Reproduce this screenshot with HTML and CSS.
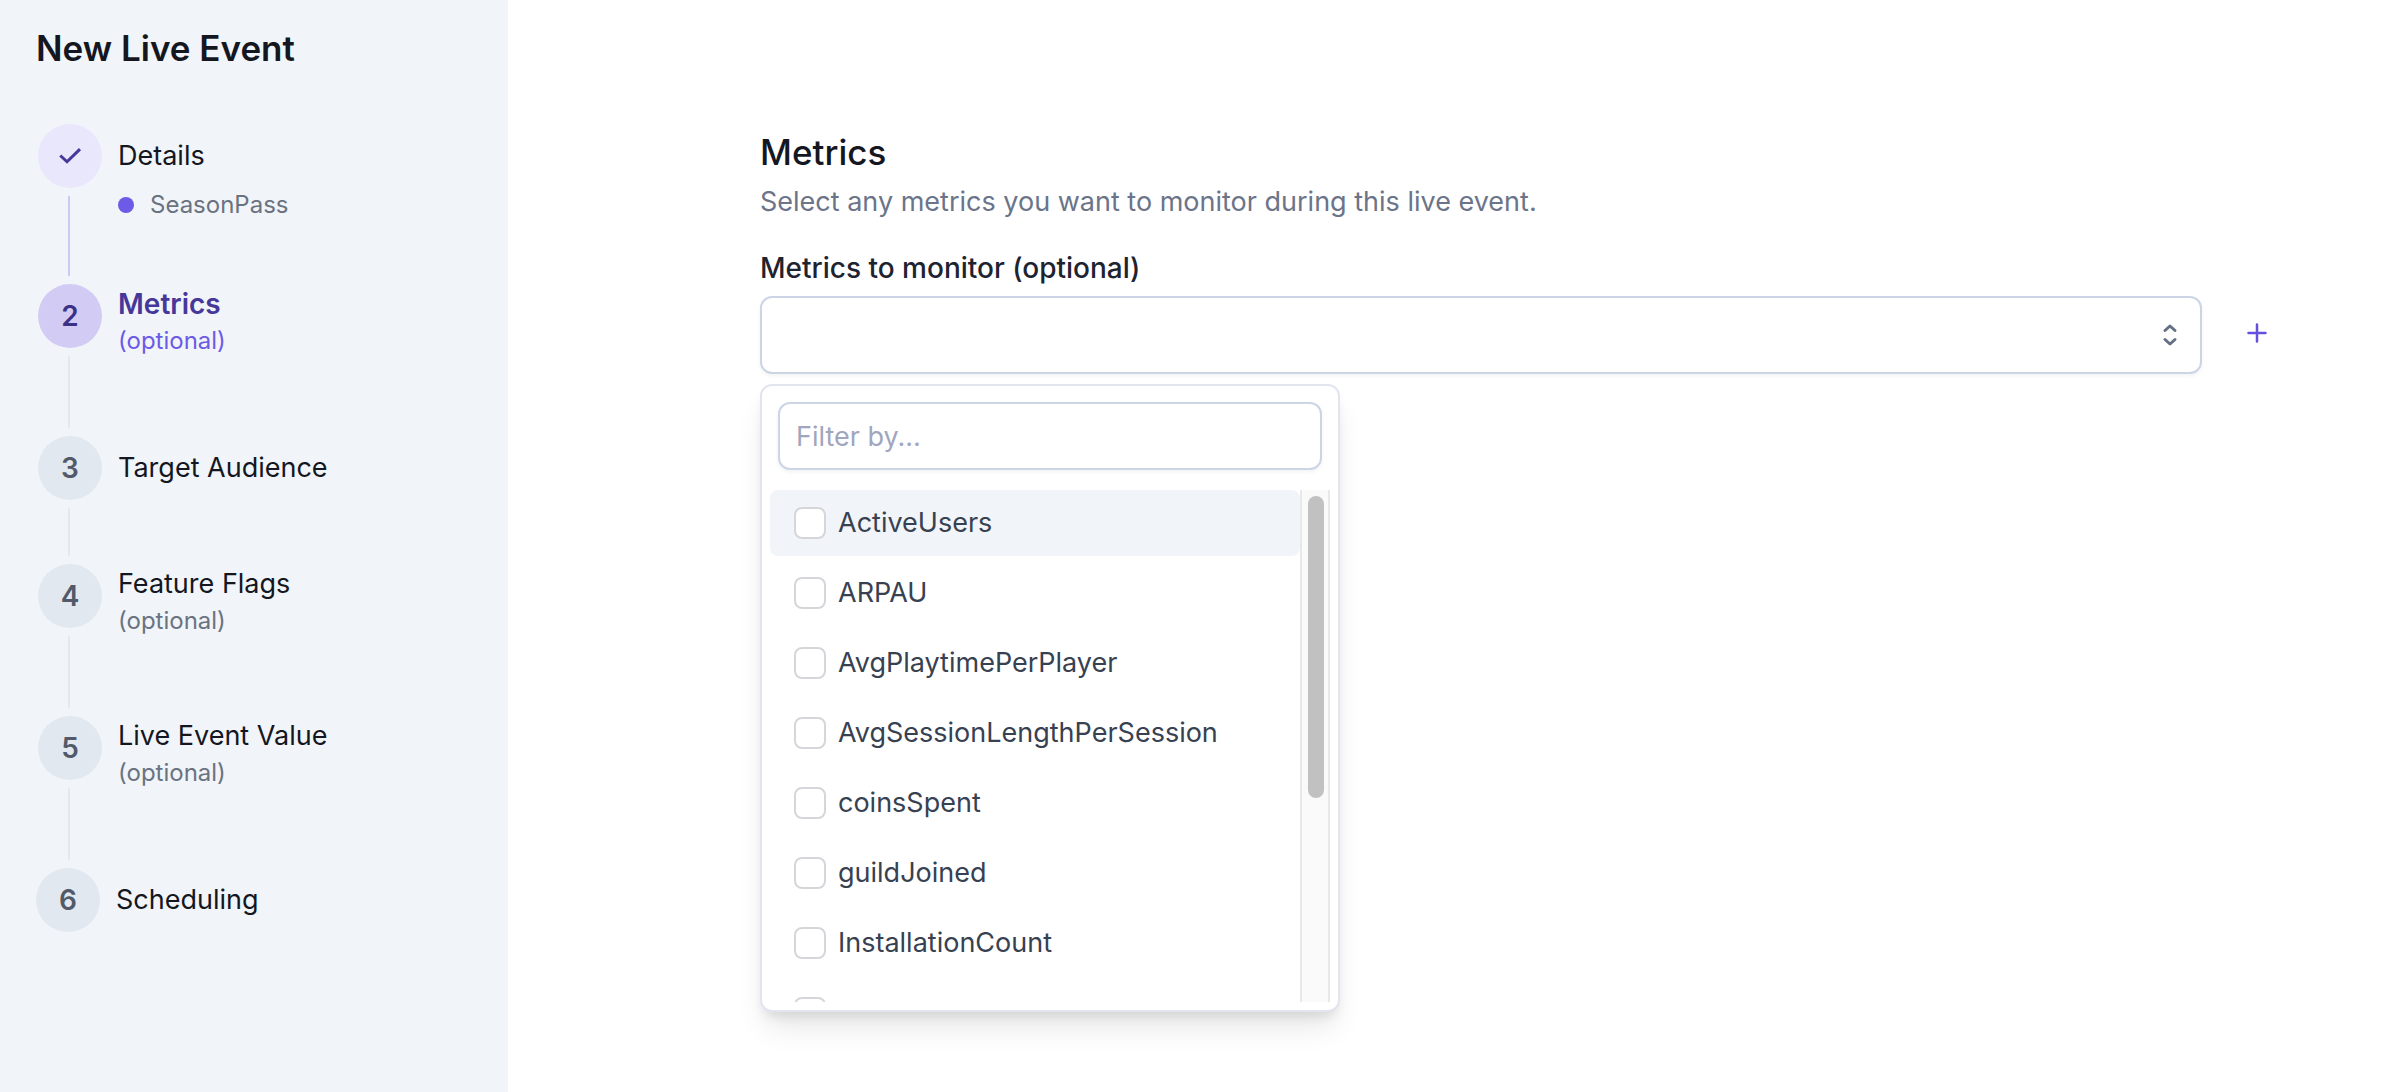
FILE: index.html
```html
<!DOCTYPE html>
<html lang="en">
<head>
<meta charset="utf-8">
<title>New Live Event</title>
<link rel="stylesheet" href="styles.css">
</head>
<body>
<div class="page">
    <aside class="sidebar">
        <h1>New Live Event</h1>
        <ol class="steps">
            <li class="step done">
                <div class="marker">
                    <span class="circle">
                        <svg width="24" height="20" viewBox="0 0 24 20" fill="none" stroke="currentColor" stroke-width="3"><path d="M2.3 9.5l6.7 6.3L22 3.2"/></svg>
                    </span>
                    <span class="line"></span>
                </div>
                <div class="content">
                    <div class="label">Details</div>
                    <div class="value"><span class="dot"></span>SeasonPass</div>
                </div>
            </li>
            <li class="step current">
                <div class="marker"><span class="circle">2</span><span class="line"></span></div>
                <div class="content optional">
                    <div class="label">Metrics</div>
                    <div class="note">(optional)</div>
                </div>
            </li>
            <li class="step">
                <div class="marker"><span class="circle">3</span><span class="line"></span></div>
                <div class="content">
                    <div class="label">Target Audience</div>
                </div>
            </li>
            <li class="step">
                <div class="marker"><span class="circle">4</span><span class="line"></span></div>
                <div class="content optional">
                    <div class="label">Feature Flags</div>
                    <div class="note">(optional)</div>
                </div>
            </li>
            <li class="step">
                <div class="marker"><span class="circle">5</span><span class="line"></span></div>
                <div class="content optional">
                    <div class="label">Live Event Value</div>
                    <div class="note">(optional)</div>
                </div>
            </li>
            <li class="step">
                <div class="marker"><span class="circle">6</span></div>
                <div class="content">
                    <div class="label">Scheduling</div>
                </div>
            </li>
        </ol>
    </aside>

    <main class="main">
        <h2>Metrics</h2>
        <p class="intro">Select any metrics you want to monitor during this live event.</p>
        <label class="field-label" for="metrics">Metrics to monitor (optional)</label>
        <div class="field-row">
            <div class="field">
                <select id="metrics"><option value=""></option></select>
                <svg class="chevrons" width="16" height="24" viewBox="0 0 16 24" fill="none" stroke="currentColor" stroke-width="3" stroke-linecap="round" stroke-linejoin="round"><path d="M3 7.5L8 3l5 4.5M3 16.5L8 21l5-4.5"/></svg>

                <div class="dropdown">
                    <input class="filter" type="text" placeholder="Filter by..." aria-label="Filter by">
                    <div class="options">
                        <div class="list">
                            <label class="option active"><input type="checkbox">ActiveUsers</label>
                            <label class="option"><input type="checkbox">ARPAU</label>
                            <label class="option"><input type="checkbox">AvgPlaytimePerPlayer</label>
                            <label class="option"><input type="checkbox">AvgSessionLengthPerSession</label>
                            <label class="option"><input type="checkbox">coinsSpent</label>
                            <label class="option"><input type="checkbox">guildJoined</label>
                            <label class="option"><input type="checkbox">InstallationCount</label>
                            <label class="option"><input type="checkbox" aria-label="Metric"></label>
                        </div>
                        <div class="scrollbar"><div class="thumb"></div></div>
                    </div>
                </div>
            </div>
            <button class="add" type="button" aria-label="Add metric">
                <svg width="20" height="20" viewBox="0 0 20 20" fill="none" stroke="currentColor" stroke-width="2.5" stroke-linecap="round"><path d="M10 1.5v17M1.5 10h17"/></svg>
            </button>
        </div>
    </main>
</div>
</body>
</html>
```
FILE: styles.css
```css
* {
    box-sizing: border-box;
}

body {
    margin: 0;
    font-family: Inter, "Liberation Sans", sans-serif;
    font-size: 27px;
    line-height: 40px;
    color: #14171f;
    background-color: #fff;
}

.page {
    display: flex;
    min-height: 100vh;
}

/* sidebar */

.sidebar {
    flex: 0 0 508px;
    padding: 20px 36px;
    background-color: #f1f5f9;
}

h1 {
    margin: 0 0 48px;
    font-size: 35px;
    line-height: 56px;
    font-weight: 600;
}

.steps {
    margin: 0;
    padding: 0;
    list-style: none;
}

.step {
    display: flex;
    gap: 16px;
    padding-left: 2px;
}

.step:last-child {
    padding-left: 0;
}

.marker {
    display: flex;
    flex-direction: column;
    gap: 8px;
}

.circle {
    display: flex;
    align-items: center;
    justify-content: center;
    width: 64px;
    height: 64px;
    border-radius: 50%;
    background-color: #e2e8f0;
    color: #525a69;
    font-size: 28px;
    font-weight: 600;
}

.line {
    flex: 1;
    width: 2px;
    margin: 0 0 8px 30px;
    background-color: #e2e8f0;
}

.content {
    padding: 12px 0 76px;
}

.content.optional {
    padding: 0 0 78px;
}

.done .content {
    padding-bottom: 62px;
}

.step:last-child .content {
    padding-bottom: 12px;
}

.note,
.value {
    font-size: 24px;
    line-height: 34px;
    color: #6b7280;
}

.value {
    display: flex;
    align-items: center;
    gap: 16px;
    margin-top: 12px;
}

.dot {
    width: 16px;
    height: 16px;
    border-radius: 50%;
    background-color: #6d5ae6;
}

.done .circle {
    background-color: #e9e7fc;
    color: #46389a;
}

.done .line {
    background-color: #cdc8f4;
}

.current .circle {
    background-color: #d2ccf5;
    color: #3c3185;
}

.current .label {
    color: #46389a;
    font-size: 28px;
    font-weight: 600;
}

.current .note {
    color: #6d5ae6;
}

/* main form */

.main {
    flex: 1;
    padding: 124px 116px 0 252px;
}

h2 {
    margin: 0;
    font-size: 35px;
    line-height: 56px;
    font-weight: 500;
}

.intro {
    margin: 2px 0 26px;
    color: #6b7489;
}

.field-label {
    display: block;
    margin-bottom: 8px;
    color: #1e2330;
    font-size: 28px;
    font-weight: 500;
}

.field-row {
    display: flex;
    align-items: center;
    gap: 28px;
}

.field {
    position: relative;
    flex: 1;
}

.field select,
.filter {
    display: block;
    width: 100%;
    border: 2px solid #cbd5e5;
    border-radius: 12px;
    background-color: #fff;
    box-shadow: 0 2px 4px rgba(0,0,0,0.05);
    font: inherit;
    appearance: none;
    outline: none;
}

.field select {
    height: 78px;
    padding: 0 64px 0 16px;
}

.chevrons {
    position: absolute;
    top: 27px;
    right: 24px;
    color: #667085;
    pointer-events: none;
}

.add {
    display: flex;
    align-items: center;
    justify-content: center;
    width: 54px;
    height: 54px;
    margin-bottom: 4px;
    padding: 0;
    border: none;
    background: none;
    color: #6350e0;
    cursor: pointer;
}

/* dropdown */

.dropdown {
    position: absolute;
    top: calc(100% + 10px);
    left: 0;
    width: 580px;
    padding: 16px 8px 8px;
    border: 2px solid #e2e4f0;
    border-radius: 12px;
    background-color: #fff;
    box-shadow: 0 20px 30px -6px rgba(0,0,0,0.1), 0 8px 12px -4px rgba(0,0,0,0.1);
}

.filter {
    width: 544px;
    height: 68px;
    margin: 0 8px 20px;
    padding: 0 16px;
}

.filter::placeholder {
    color: #a0a6bd;
    opacity: 1;
}

.options {
    display: flex;
    height: 512px;
}

.list {
    flex: 1;
    overflow: hidden;
}

.option {
    display: flex;
    align-items: center;
    gap: 12px;
    height: 66px;
    margin-bottom: 4px;
    padding-left: 24px;
    border-radius: 8px;
    color: #374151;
}

.option.active {
    background-color: #f1f5f9;
}

.option input {
    width: 32px;
    height: 32px;
    margin: 0;
    border: 2px solid #d4d6da;
    border-radius: 8px;
    background-color: #fff;
    appearance: none;
}

.scrollbar {
    width: 30px;
    padding: 6px;
    border: solid #e8e8e8;
    border-width: 0 2px;
    background-color: #fafafa;
}

.thumb {
    width: 16px;
    height: 302px;
    border-radius: 8px;
    background-color: #c1c1c1;
}
```
